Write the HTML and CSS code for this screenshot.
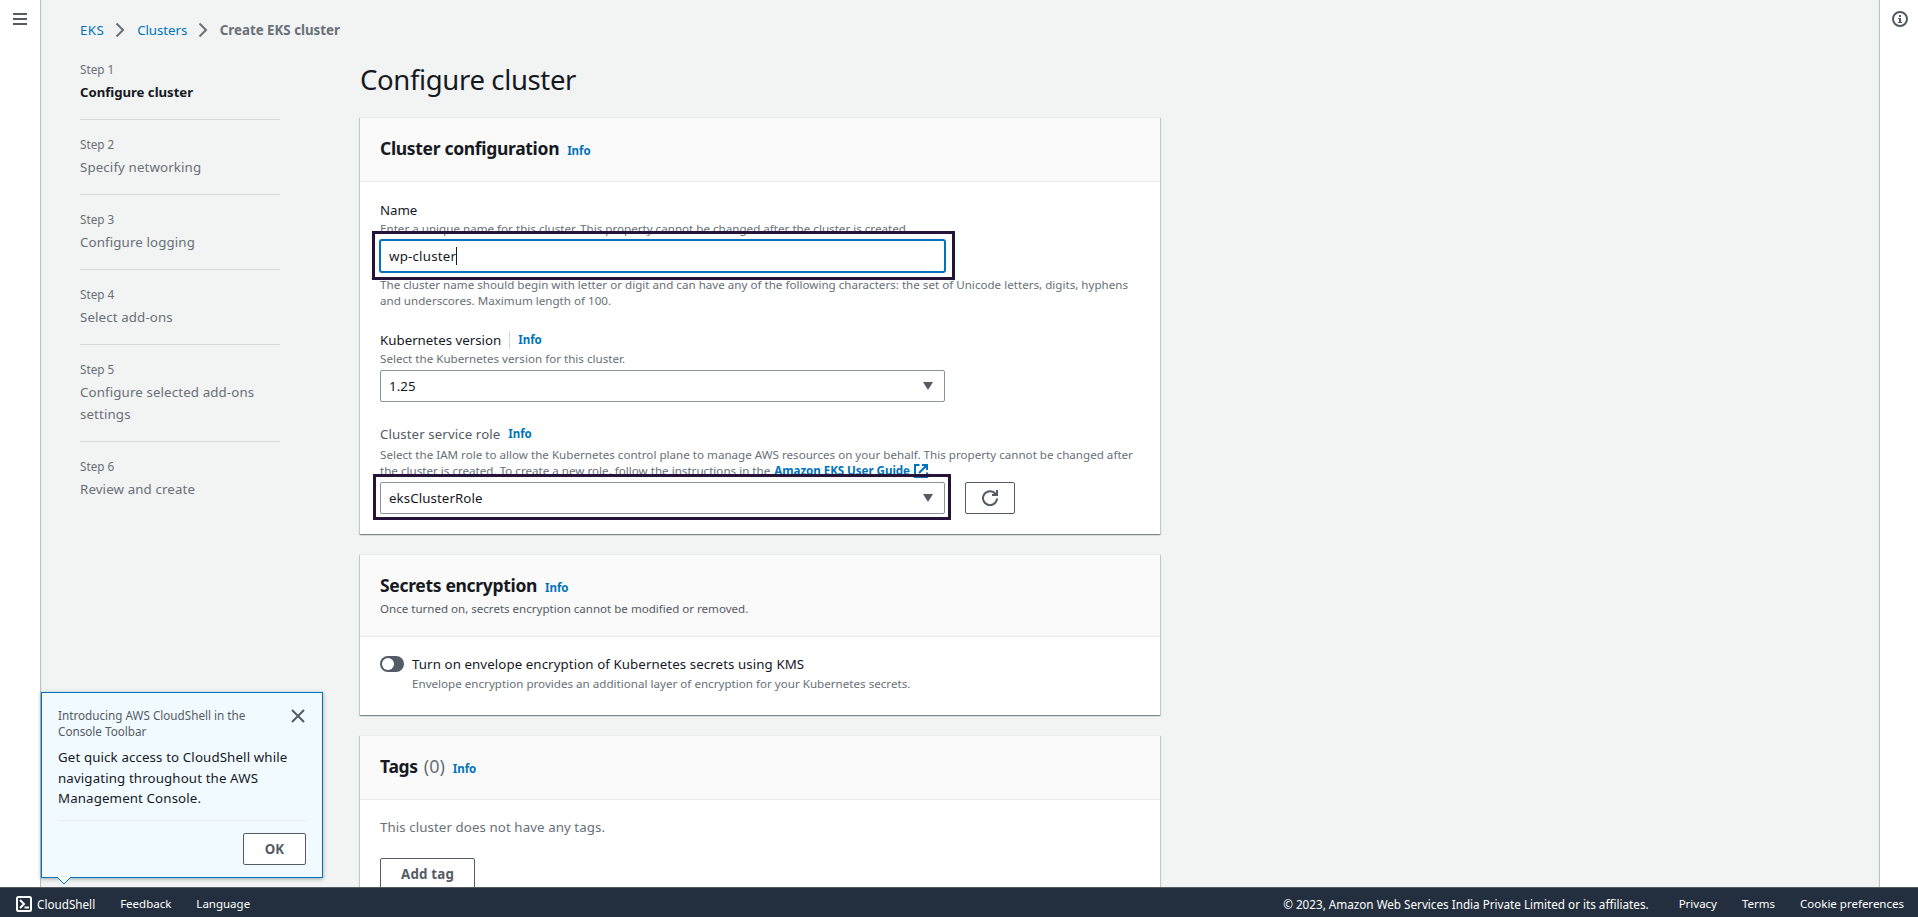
FILE: index.html
```html
<!DOCTYPE html>
<html lang="en">
<head>
<meta charset="utf-8">
<title>Create EKS cluster</title>
<link rel="stylesheet" href="styles.css">
</head>
<body>
<div class="app">
  <div class="shell">
    <aside class="rail rail-left">
      <svg width="14" height="12" viewBox="0 0 14 12"><path d="M0 1h14M0 6h14M0 11h14" stroke="#545b64" stroke-width="2"/></svg>
    </aside>
    <main class="page">
      <nav class="crumbs">
        <a class="crumb-eks">EKS</a>
        <svg width="10" height="16" viewBox="0 0 10 16"><path d="M1.500 1.500L8 8l-6.500 6.500" fill="none" stroke="#687078" stroke-width="2"/></svg>
        <a class="crumb-clusters">Clusters</a>
        <svg width="10" height="16" viewBox="0 0 10 16"><path d="M1.500 1.500L8 8l-6.500 6.500" fill="none" stroke="#687078" stroke-width="2"/></svg>
        <b>Create EKS cluster</b>
      </nav>
      <div class="columns">
        <ol class="steps">
          <li><small>Step 1</small><b>Configure cluster</b></li>
          <li><small>Step 2</small><span>Specify networking</span></li>
          <li><small>Step 3</small><span>Configure logging</span></li>
          <li><small>Step 4</small><span>Select add-ons</span></li>
          <li><small>Step 5</small><span>Configure selected add-ons<br>settings</span></li>
          <li><small>Step 6</small><span>Review and create</span></li>
        </ol>
        <div class="content">
          <h1>Configure cluster</h1>
          <section class="card card-config">
            <header><h2>Cluster configuration</h2><a class="info">Info</a></header>
            <div class="card-body">
              <div class="label label-name">Name</div>
              <div class="hint">Enter a unique name for this cluster. This property cannot be changed after the cluster is created.</div>
              <div class="field name-field focused"><span>wp-cluster</span><i class="caret"></i><div class="mark mark-name"></div></div>
              <div class="hint constraint">The cluster name should begin with letter or digit and can have any of the following characters: the set of Unicode letters, digits, hyphens<br>and underscores. Maximum length of 100.</div>
              <div class="label label-version"><span>Kubernetes version</span><i class="sep"></i><a class="info">Info</a></div>
              <div class="hint">Select the Kubernetes version for this cluster.</div>
              <div class="field version-field"><span>1.25</span><svg class="arrow" width="10" height="8" viewBox="0 0 10 8"><path d="M0 0h10L5 8z" fill="#545b64"/></svg></div>
              <div class="label label-role"><span>Cluster service role</span><a class="info">Info</a></div>
              <div class="hint hint-role">Select the IAM role to allow the Kubernetes control plane to manage AWS resources on your behalf. This property cannot be changed after<br>the cluster is created. To create a new role, follow the instructions in the <a class="guide">Amazon EKS User Guide</a> <svg class="external" width="14" height="14" viewBox="0 0 14 14" fill="none" stroke="#0073bb" stroke-width="2"><path d="M5.500 1H1v12h12V8.500M8 1h5v5M13 1L5 9"/></svg>.</div>
              <div class="role-row">
                <div class="field role-field"><span>eksClusterRole</span><svg class="arrow" width="10" height="8" viewBox="0 0 10 8"><path d="M0 0h10L5 8z" fill="#545b64"/></svg><div class="mark mark-role"></div></div>
                <button class="btn refresh" aria-label="Refresh"><svg width="16" height="16" viewBox="0 0 16 16" fill="none" stroke="#545b64" stroke-width="2"><path d="M15 8.500A7 7 0 1 1 13.500 3.800L15 5M10 5h5V0"/></svg></button>
              </div>
            </div>
          </section>
          <section class="card card-secrets">
            <header><div><h2>Secrets encryption</h2><a class="info">Info</a></div><p>Once turned on, secrets encryption cannot be modified or removed.</p></header>
            <div class="toggle-row">
              <span class="toggle"></span>
              <div><div class="toggle-label">Turn on envelope encryption of Kubernetes secrets using KMS</div><div class="hint">Envelope encryption provides an additional layer of encryption for your Kubernetes secrets.</div></div>
            </div>
          </section>
          <section class="card card-tags">
            <header><h2>Tags</h2><span class="count">(0)</span><a class="info">Info</a></header>
            <div class="tags-body"><p>This cluster does not have any tags.</p><button class="btn add">Add tag</button></div>
          </section>
        </div>
      </div>
    </main>
    <aside class="rail rail-right">
      <svg width="16" height="16" viewBox="0 0 16 16"><circle cx="8" cy="8" r="7" fill="none" stroke="#545b64" stroke-width="2"/><path d="M7 4h2v2H7zM6 7h3v4h1v1H6v-1h1V8H6z" fill="#545b64"/></svg>
    </aside>
  </div>
  <footer class="footer">
    <svg class="cs-icon" width="16" height="16" viewBox="0 0 16 16" fill="none" stroke="#fff" stroke-width="2"><rect x="1" y="1" width="14" height="14" rx="1.500"/><path d="M4 4l4 4-4 4M8.500 11.500H13"/></svg>
    <a class="cloudshell">CloudShell</a><a class="feedback">Feedback</a><a class="language">Language</a>
    <span class="legal">© 2023, Amazon Web Services India Private Limited or its affiliates.</span><a class="privacy">Privacy</a><a class="terms">Terms</a><a class="cookies">Cookie preferences</a>
  </footer>
  <div class="popover">
    <div class="pop-head"><p>Introducing AWS CloudShell in the<br>Console Toolbar</p>
      <svg width="14" height="14" viewBox="0 0 14 14"><path d="M1 1l12 12M13 1L1 13" stroke="#545b64" stroke-width="2"/></svg></div>
    <p class="pop-text">Get quick access to CloudShell while<br>navigating throughout the AWS<br>Management Console.</p>
    <div class="pop-foot"><button class="btn ok">OK</button></div>
    <svg class="pop-tip" width="14" height="8" viewBox="0 0 14 8"><path d="M0 0L7 7L14 0z" fill="#f1faff"/><path d="M0 0L7 7L14 0" fill="none" stroke="#0073bb"/></svg>
  </div>
</div>
</body>
</html>
```
FILE: styles.css
```css
* { box-sizing: border-box; }
body { margin: 0; font: 13.300px/22px "Noto Sans", "Open Sans", sans-serif; letter-spacing: .08px; color: #16191f; }
h1, h2, p, ol { margin: 0; padding: 0; font-weight: 400; }
svg { display: block; flex: none; }
.app { position: relative; height: 917px; overflow: hidden; display: flex; flex-direction: column; }
.shell { height: 887px; display: flex; background: #f2f3f3; overflow: hidden; }
.rail { width: 40px; background: #fff; flex: none; padding-top: 13px; box-shadow: 0 0 1px 1px #bcc2c4; z-index: 1; }
.rail-left { padding-left: 13px; }
.rail-right { width: 38px; padding: 11px 0 0 12px; }
.page { flex: 1; padding: 19px 0 0 40px; }
.crumbs { display: flex; align-items: center; height: 22px; }
.crumbs a, .info, .guide { color: #0073bb; }
.crumbs svg { margin: 0 12px 0 11px; }
.crumbs b { color: #687078; letter-spacing: 0; margin-left: -.5px; }
.crumbs .crumb-eks { letter-spacing: .4px; }
.crumb-clusters { letter-spacing: -.05px; }
.columns { display: flex; gap: 80px; padding-top: 18px; }
.steps { width: 200px; list-style: none; color: #687078; letter-spacing: .12px; }
.steps li { padding: 0 0 16px; }
.steps li + li { border-top: 1px solid #d5dbdb; padding-top: 14px; }
.steps small { display: block; font-size: 11.700px; line-height: 21px; padding-bottom: 1px; letter-spacing: 0; }
.steps b, .steps span { display: block; }
.steps b { color: #16191f; font-size: 13.200px; letter-spacing: -.03px; }
.content { width: 800px; }
h1 { font-size: 27.500px; line-height: 36px; padding: 3px 0 19px; letter-spacing: -.36px; }
.card { background: #fff; border-top: 1px solid #eaeded; margin-bottom: 20px; box-shadow: 0 1px 1px rgba(0,28,36,.3), 1px 1px 1px rgba(0,28,36,.15), -1px 1px 1px rgba(0,28,36,.15); }
.card header { background: #fafafa; border-bottom: 1px solid #eaeded; padding: 18px 20px 0; }
.card h2 { display: inline-block; font-size: 17.500px; font-weight: 700; line-height: 24px; letter-spacing: -.32px; }
.info { font-size: 11.500px; font-weight: 700; margin-left: 8px; letter-spacing: -.05px; }
.card-config { height: 417px; }
.card-config header, .card-tags header { height: 64px; }
.card-body { padding: 17px 20px 0; }
.label { height: 22px; display: flex; align-items: center; }
.label-name { letter-spacing: -.05px; height: 21px; margin-bottom: 1px; line-height: 20px; }
.hint { font-size: 11.600px; line-height: 16px; color: #687078; white-space: nowrap; letter-spacing: .01px; }
.field { position: relative; width: 565px; height: 32px; border: 1px solid #879596; border-radius: 2px; background: #fff; display: flex; align-items: center; padding: 0 11px 0 8px; }
.focused { border-color: #0073bb; box-shadow: 0 0 0 1px #0073bb; }
.caret { width: 1px; height: 18px; background: #16191f; }
.name-field { margin-top: 3px; letter-spacing: .2px; }
.mark { position: absolute; border: 3px solid #25133a; }
.mark-name { left: -9px; top: -10px; width: 583px; height: 49px; }
.mark-role { left: -8px; top: -9px; width: 578px; height: 46px; }
.constraint { padding-top: 5px; }
.label-version { margin-top: 20px; letter-spacing: 0; }
.sep { width: 1px; height: 18px; background: #d5dbdb; margin-left: 8px; }
.version-field { margin-top: 3px; }
.arrow { margin-left: auto; }
.label-role { margin-top: 21px; color: #545b64; }
.hint-role { margin-top: 2px; }
.guide { font-weight: 700; text-decoration: underline; letter-spacing: -.05px; margin-left: 1px; }
.external { display: inline-block; vertical-align: -3px; margin-left: 1px; }
.role-row { display: flex; gap: 20px; margin-top: 3px; }
.btn { background: #fff; border: 1px solid #545b64; border-radius: 2px; padding: 0; height: 32px; color: #545b64; font: 700 13.300px/20px "Noto Sans", sans-serif; letter-spacing: .2px; display: flex; align-items: center; justify-content: center; }
.refresh { width: 50px; }
.card-secrets { height: 161px; }
.card-secrets header { height: 82px; }
.card-secrets p { color: #545b64; font-size: 11.550px; line-height: 16px; padding-top: 2px; letter-spacing: 0; }
.toggle-row { display: flex; gap: 8px; padding: 16px 20px; }
.toggle { width: 24px; height: 16px; border-radius: 8px; background: #545b64; margin-top: 3px; padding: 2px; }
.toggle::before { content: ""; display: block; width: 12px; height: 12px; border-radius: 50%; background: #fff; }
.toggle-row .hint { padding-top: 1px; }
.count { font-size: 18px; color: #687078; margin-left: 6px; letter-spacing: 0; }
.tags-body { padding: 16px 20px; color: #687078; }
.add { width: 95px; margin-top: 20px; }
.footer { height: 30px; background: #232f3e; border-top: 1px solid #545b64; color: #fff; font-size: 11.700px; letter-spacing: 0; display: flex; align-items: center; padding: 3px 14px 0 16px; }
.cs-icon { margin-right: 5px; }
.feedback, .language { margin-left: 25px; font-size: 11.500px; }
.legal { margin-left: auto; }
.privacy { margin-left: 30px; font-size: 11.500px; }
.terms, .cookies { margin-left: 25px; font-size: 11.500px; }
.popover { position: absolute; left: 41px; top: 692px; width: 282px; height: 186px; background: #f1faff; border: 1px solid #0073bb; padding: 15px 16px; box-shadow: 0 1px 4px rgba(0,28,36,.35); z-index: 2; }
.pop-head { display: flex; justify-content: space-between; font-size: 11.700px; line-height: 16px; color: #545b64; white-space: nowrap; letter-spacing: 0; }
.pop-head p { margin-top: -1px; }
.pop-head svg { margin: 1px 1px 0 0; }
.pop-text { line-height: 20.500px; margin-top: 8px; padding-bottom: 11.500px; white-space: nowrap; border-bottom: 1px solid #eaeded; letter-spacing: .12px; }
.pop-foot { display: flex; justify-content: flex-end; padding-top: 12px; }
.ok { width: 63px; }
.pop-tip { position: absolute; left: 15px; top: 184px; }
```
